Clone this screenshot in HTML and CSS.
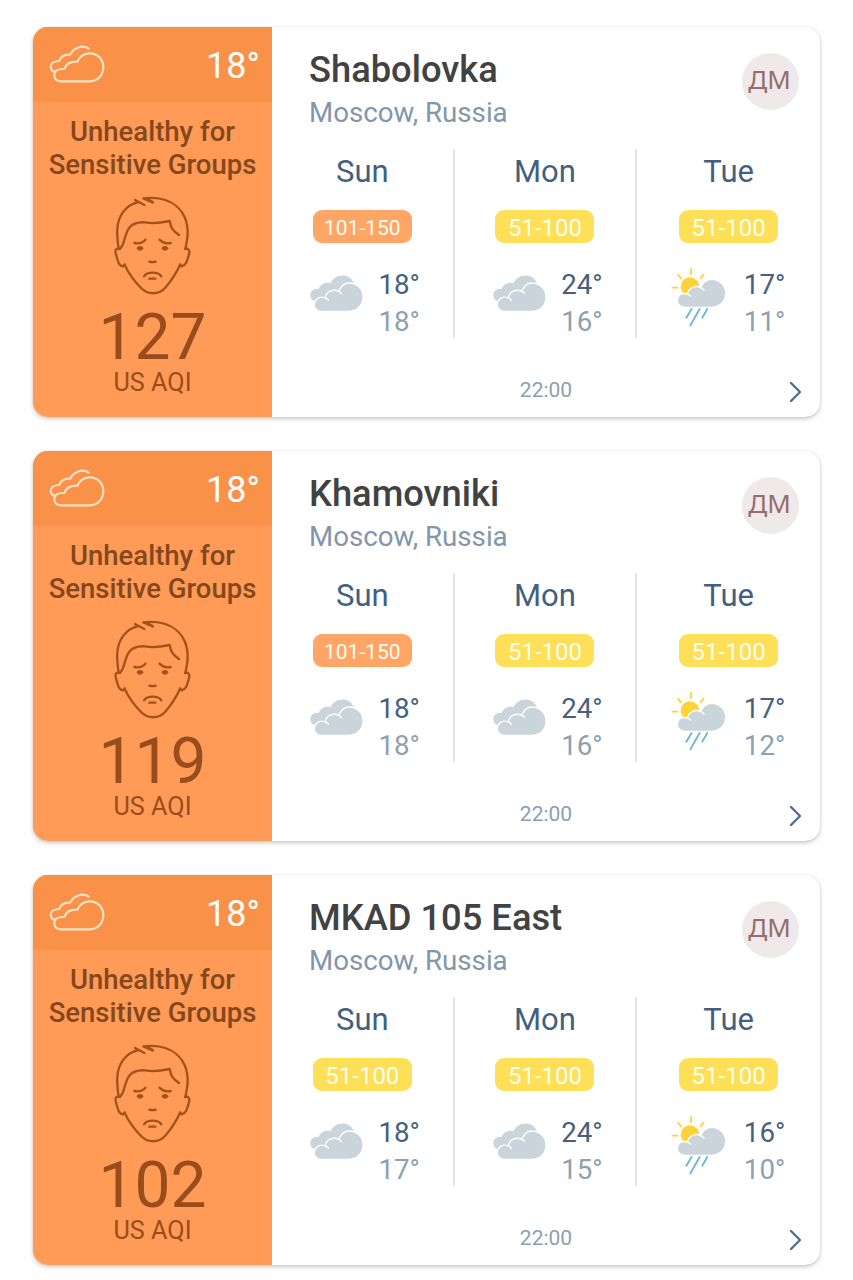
FILE: index.html
```html
<!DOCTYPE html>
<html lang="en">

<head>
    <meta charset="UTF-8">
    <meta name="viewport" content="width=device-width, initial-scale=1.0">
    <title>Air Quality</title>
    <link rel="stylesheet" href="styles.css">
</head>

<body>
    <svg class="sprite" width="0" height="0">
        <symbol id="cloud-line" viewBox="84 84 180 120">
            <path d="M122 196C110 196 103 188 103 178C103 165 113 158 133 159C138 144 152 136 172 137C180 120 192 112 209 112C233 112 250 130 250 154C250 178 233 196 209 196Z"/>
            <path d="M103 168C95 164 92 159 92 153C92 142 102 135 118 135C122 122 134 115 151 116C160 96 188 84 206 98"/>
        </symbol>
        <symbol id="cloudy" viewBox="42 21 192 210">
            <path class="cloud" d="M72 138C64 134 61 128 61 121C61 108 72 100 86 103C90 88 106 80 122 84C134 56 178 52 191 83L170 120L90 134Z"/>
            <path class="cloud front" d="M93 169C80 169 73 159 73 149C73 132 90 122 106 129C108 109 130 101 146 109C153 92 163 84 177 84C201 84 219 102 219 127C219 151 201 169 177 169Z"/>
            <path class="gap" d="M106 129Q112 131 115 136M146 109Q152 111 155 116"/>
        </symbol>
        <symbol id="sun-rain" viewBox="87 21 192 210">
            <circle class="sun" cx="150" cy="95" r="28"/>
            <path class="ray" d="M153 42V57M114 59L123 70M191 59L182 70M97 98H112"/>
            <path class="cloud front" d="M134 157C121 157 112 148 112 136C112 120 127 112 142 117C147 97 168 90 182 98C189 81 200 73 215 73C239 73 257 91 257 115C257 139 239 157 215 157Z"/>
            <path class="gap" d="M142 117Q148 119 151 123M182 98Q188 100 192 105"/>
            <path class="drop" d="M155 162L139 188M179 162L151 211M202 162L187 188"/>
        </symbol>
        <symbol id="face" viewBox="60 24 252 315">
            <path d="M86 192C80 150 76 112 100 80Q118 57 143 52M135 45L163 60M188 52L160 40C218 34 264 52 284 97C299 132 292 164 286 192"/>
            <path d="M188 52L174 43"/>
            <path d="M90 191C104 180 102 153 116 131C128 112 148 111 165 112C196 118 220 112 239 108C242 128 248 137 267 150"/>
            <path d="M90 192C77 188 74 196 78 208C84 226 84 244 100 244L104 238C114 263 132 287 153 309C173 330 206 330 225 309C245 287 260 262 271 238L275 244C291 241 292 222 298 204C299 194 294 189 285 192"/>
            <path d="M133 174Q154 178 166 164M242 174Q222 178 209 164M178 230Q188 233 197 230M162 274Q170 263 188 263Q206 263 214 274M178 281H196"/>
            <ellipse class="eye" cx="150" cy="190" rx="8.5" ry="5.5"/>
            <ellipse class="eye" cx="225" cy="190" rx="8.5" ry="5.5"/>
        </symbol>
        <symbol id="chevron" viewBox="0 0 14 22">
            <path d="M2 2L11 11L2 20"/>
        </symbol>
    </svg>

    <main class="list">
        <section class="card">
            <div class="aqi">
                <div class="now">
                    <svg class="now-icon"><use href="#cloud-line"/></svg>
                    <span>18°</span>
                </div>
                <p class="status">Unhealthy for<br>Sensitive Groups</p>
                <svg class="face"><use href="#face"/></svg>
                <div class="value">127</div>
                <div class="unit">US AQI</div>
            </div>
            <div class="info">
                <header class="place">
                    <div>
                        <h2>Shabolovka</h2>
                        <p>Moscow, Russia</p>
                    </div>
                    <div class="avatar">ДМ</div>
                </header>
                <div class="days">
                    <div class="day">
                        <h3>Sun</h3>
                        <span class="pill orange">101-150</span>
                        <div class="weather">
                            <svg class="icon"><use href="#cloudy"/></svg>
                            <div class="temps"><div>18°</div><div class="low">18°</div></div>
                        </div>
                    </div>
                    <div class="day">
                        <h3>Mon</h3>
                        <span class="pill">51-100</span>
                        <div class="weather">
                            <svg class="icon"><use href="#cloudy"/></svg>
                            <div class="temps"><div>24°</div><div class="low">16°</div></div>
                        </div>
                    </div>
                    <div class="day">
                        <h3>Tue</h3>
                        <span class="pill">51-100</span>
                        <div class="weather">
                            <svg class="icon"><use href="#sun-rain"/></svg>
                            <div class="temps"><div>17°</div><div class="low">11°</div></div>
                        </div>
                    </div>
                </div>
                <footer class="foot">
                    <time>22:00</time>
                    <svg class="chevron"><use href="#chevron"/></svg>
                </footer>
            </div>
        </section>

        <section class="card">
            <div class="aqi">
                <div class="now">
                    <svg class="now-icon"><use href="#cloud-line"/></svg>
                    <span>18°</span>
                </div>
                <p class="status">Unhealthy for<br>Sensitive Groups</p>
                <svg class="face"><use href="#face"/></svg>
                <div class="value">119</div>
                <div class="unit">US AQI</div>
            </div>
            <div class="info">
                <header class="place">
                    <div>
                        <h2>Khamovniki</h2>
                        <p>Moscow, Russia</p>
                    </div>
                    <div class="avatar">ДМ</div>
                </header>
                <div class="days">
                    <div class="day">
                        <h3>Sun</h3>
                        <span class="pill orange">101-150</span>
                        <div class="weather">
                            <svg class="icon"><use href="#cloudy"/></svg>
                            <div class="temps"><div>18°</div><div class="low">18°</div></div>
                        </div>
                    </div>
                    <div class="day">
                        <h3>Mon</h3>
                        <span class="pill">51-100</span>
                        <div class="weather">
                            <svg class="icon"><use href="#cloudy"/></svg>
                            <div class="temps"><div>24°</div><div class="low">16°</div></div>
                        </div>
                    </div>
                    <div class="day">
                        <h3>Tue</h3>
                        <span class="pill">51-100</span>
                        <div class="weather">
                            <svg class="icon"><use href="#sun-rain"/></svg>
                            <div class="temps"><div>17°</div><div class="low">12°</div></div>
                        </div>
                    </div>
                </div>
                <footer class="foot">
                    <time>22:00</time>
                    <svg class="chevron"><use href="#chevron"/></svg>
                </footer>
            </div>
        </section>

        <section class="card">
            <div class="aqi">
                <div class="now">
                    <svg class="now-icon"><use href="#cloud-line"/></svg>
                    <span>18°</span>
                </div>
                <p class="status">Unhealthy for<br>Sensitive Groups</p>
                <svg class="face"><use href="#face"/></svg>
                <div class="value">102</div>
                <div class="unit">US AQI</div>
            </div>
            <div class="info">
                <header class="place">
                    <div>
                        <h2>MKAD 105 East</h2>
                        <p>Moscow, Russia</p>
                    </div>
                    <div class="avatar">ДМ</div>
                </header>
                <div class="days">
                    <div class="day">
                        <h3>Sun</h3>
                        <span class="pill">51-100</span>
                        <div class="weather">
                            <svg class="icon"><use href="#cloudy"/></svg>
                            <div class="temps"><div>18°</div><div class="low">17°</div></div>
                        </div>
                    </div>
                    <div class="day">
                        <h3>Mon</h3>
                        <span class="pill">51-100</span>
                        <div class="weather">
                            <svg class="icon"><use href="#cloudy"/></svg>
                            <div class="temps"><div>24°</div><div class="low">15°</div></div>
                        </div>
                    </div>
                    <div class="day">
                        <h3>Tue</h3>
                        <span class="pill">51-100</span>
                        <div class="weather">
                            <svg class="icon"><use href="#sun-rain"/></svg>
                            <div class="temps"><div>16°</div><div class="low">10°</div></div>
                        </div>
                    </div>
                </div>
                <footer class="foot">
                    <time>22:00</time>
                    <svg class="chevron"><use href="#chevron"/></svg>
                </footer>
            </div>
        </section>
    </main>
</body>

</html>
```
FILE: styles.css
```css
* {
    box-sizing: border-box;
}

body {
    margin: 0;
    background-color: #fefefe;
    font-family: Roboto, sans-serif;
}

h2, h3, p {
    margin: 0;
}

svg {
    display: block;
    fill: none;
    stroke-linecap: round;
    stroke-linejoin: round;
}

.sprite {
    position: absolute;
}

.list {
    display: flex;
    flex-direction: column;
    gap: 34px;
    padding: 27px 33px 15px;
}

.card {
    display: flex;
    width: 787px;
    height: 390px;
    border-radius: 15px;
    background-color: #fff;
    box-shadow: 0 2px 4px rgba(0, 0, 0, 0.2), 0 0 2px rgba(0, 0, 0, 0.1);
    overflow: hidden;
}

/* left panel */
.aqi {
    display: flex;
    flex-direction: column;
    align-items: center;
    width: 239px;
    background-color: #ff9b57;
    color: #994d1c;
}

.now {
    display: flex;
    align-items: center;
    justify-content: space-between;
    align-self: stretch;
    height: 75px;
    padding: 3px 12px 0 15px;
    background-color: #fa9149;
    color: #fff;
    font-size: 36px;
    line-height: 72px;
}

.now-icon {
    width: 60px;
    height: 40px;
    margin-bottom: 4px;
    stroke: #ffe0c4;
    stroke-width: 6.5;
}

.status {
    margin-top: 14px;
    color: #85471c;
    font-size: 27.5px;
    font-weight: 500;
    line-height: 32.5px;
    text-align: center;
    white-space: nowrap;
}

.face {
    width: 84px;
    height: 105px;
    margin: 12px 2px 0 0;
    stroke: #a3521c;
    stroke-width: 7;
}

.eye {
    fill: #a3521c;
    stroke-width: 3;
}

.value {
    margin-top: 8px;
    font-size: 64px;
    line-height: 64px;
}

.unit {
    font-size: 25.2px;
    line-height: 25px;
}

/* right panel */
.info {
    display: flex;
    flex: 1;
    flex-direction: column;
}

.place {
    display: flex;
    justify-content: space-between;
    padding: 20px 21px 0 37px;
}

.place h2 {
    color: #424242;
    font-size: 36.3px;
    font-weight: 500;
    line-height: 45px;
}

.place p {
    margin-top: 1px;
    color: #8296ab;
    font-size: 27.7px;
    line-height: 40px;
}

.avatar {
    width: 57px;
    height: 57px;
    margin-top: 6px;
    padding-right: 2px;
    border-radius: 50%;
    background-color: #efe9ea;
    color: #966c6c;
    font-family: "Noto Sans", sans-serif;
    font-size: 26px;
    line-height: 52px;
    text-align: center;
}

.days {
    display: grid;
    grid-template-columns: repeat(3, 1fr);
    height: 189px;
    margin-top: 16px;
}

.day {
    display: flex;
    flex-direction: column;
    align-items: center;
    height: 189px;
    border-right: 2px solid #e2e4e6;
}

.day:last-child {
    border-right: none;
}

.day h3 {
    color: #425f80;
    font-size: 31px;
    font-weight: 400;
    line-height: 46px;
}

.pill {
    width: 99px;
    height: 33px;
    margin-top: 15px;
    border-radius: 9px;
    background-color: #fedf58;
    color: #fffdf0;
    font-size: 24px;
    line-height: 36px;
    text-align: center;
}

.pill.orange {
    background-color: #ffa566;
    font-size: 21px;
}

.weather {
    display: flex;
    align-self: flex-start;
    margin-top: 19px;
    padding-left: 32px;
}

.icon {
    width: 64px;
    height: 70px;
    margin-right: 10.5px;
}

.cloud {
    fill: #c9d4db;
}

.front {
    stroke: #fff;
    stroke-width: 4;
}

.gap {
    stroke: #fff;
    stroke-width: 4;
}

.sun {
    fill: #ffd338;
}

.ray {
    stroke: #ffd338;
    stroke-width: 5.5;
}

.drop {
    stroke: #6db2dc;
    stroke-width: 5.5;
}

.temps {
    padding-top: 4px;
    color: #47607c;
    font-size: 27.7px;
    line-height: 37px;
}

.low {
    color: #8da1b2;
}

.foot {
    display: grid;
    grid-template-columns: 1fr auto 1fr;
    margin-top: auto;
    padding: 0 17px 14px;
    color: #8c9fb1;
    font-size: 21px;
    line-height: 26px;
}

.foot time {
    grid-column: 2;
}

.chevron {
    justify-self: end;
    width: 14px;
    height: 22px;
    margin-top: 4px;
    stroke: #50718f;
    stroke-width: 2.4;
}
```
